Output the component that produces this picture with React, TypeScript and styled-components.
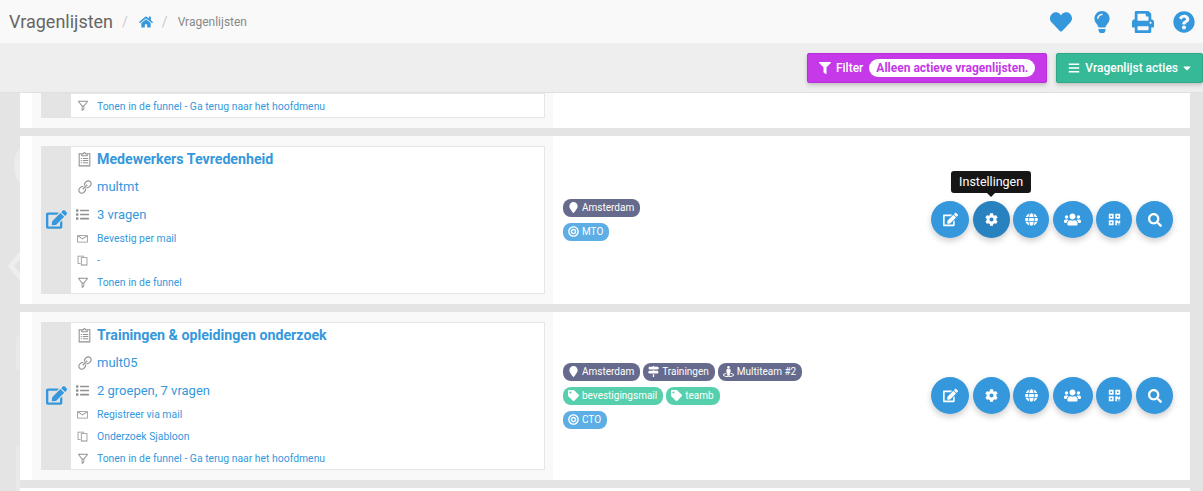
import { ReactNode } from 'react'
import styled, { createGlobalStyle } from 'styled-components'
import {
  FaBars, FaBullseye, FaCaretDown, FaCog, FaEdit, FaFilter, FaGlobe, FaHeart, FaHome, FaLightbulb, FaList,
  FaMapMarker, FaMapSigns, FaPrint, FaQrcode, FaQuestionCircle, FaSearch, FaStreetView, FaTag, FaUsers,
} from 'react-icons/fa'
import {
  LiaClipboardListSolid, LiaCopySolid, LiaEnvelopeSolid, LiaFilterSolid, LiaLinkSolid,
} from 'react-icons/lia'

const blue = '#3598dc'

const GlobalStyle = createGlobalStyle`
  html, body { margin: 0; padding: 0; height: 100%; overflow: hidden; background: #e4e4e4; }
  * { box-sizing: border-box; font-family: Roboto, 'Liberation Sans', sans-serif; }
`

const Page = styled.div`
  width: 1203px;
  height: 491px;
  overflow: hidden;
  position: relative;
`

const TopBar = styled.div`
  height: 43px;
  background: #f9f9f9;
  display: flex;
  align-items: center;
  padding: 0 8px 0 9px;
`

const PageTitle = styled.h1`
  margin: 0;
  font-size: 18px;
  font-weight: 400;
  color: #666;
`

const Crumbs = styled.div`
  display: flex;
  align-items: center;
  margin-left: 9px;
  gap: 10px;
  font-size: 12px;
  color: #888;
  flex: 1;
  svg { color: ${blue}; font-size: 14px; margin-left: 1px; margin-right: -1px; }
`

const Slash = styled.span`
  color: #ccc;
  font-size: 14px;
`

const TopIcons = styled.div`
  display: flex;
  align-items: center;
  gap: 19px;
  color: ${blue};
  font-size: 22px;
  svg { display: block; }
`

const ToolBar = styled.div`
  height: 50px;
  background: #eee;
  border-bottom: 1px solid #e0e0e0;
  display: flex;
  justify-content: flex-end;
  align-items: flex-start;
  gap: 9px;
  padding: 10px 0 0 0;
`

const ActionButton = styled.button<{ $bg: string; $edge: string }>`
  height: 30px;
  padding: 0 11px;
  border: 1px solid ${p => p.$edge};
  border-radius: 2px;
  background: ${p => p.$bg};
  color: #fff;
  display: flex;
  align-items: center;
  gap: 5px;
  font-size: 12px;
  font-weight: 500;
  box-shadow: 0 2px 4px rgba(0, 0, 0, 0.2);
`

const Caret = styled(FaCaretDown)`
  margin: 0 -2px;
`

const FilterPill = styled.span`
  background: #fff;
  color: #c539e8;
  font-weight: 700;
  font-size: 12px;
  border-radius: 10px;
  height: 18px;
  line-height: 18px;
  padding: 0 7px;
  margin-left: 1px;
  white-space: nowrap;
`

const List = styled.div`
  width: 1170px;
  margin-left: 20px;
  display: flex;
  flex-direction: column;
  gap: 7.5px;
`

const Card = styled.div<{ $clipped?: boolean }>`
  display: flex;
  background: #fff;
  height: ${p => (p.$clipped ? '35px' : '168.5px')};
`

const InfoCell = styled.div<{ $clipped?: boolean }>`
  width: 521px;
  margin-left: 12px;
  background: #f9f9f9;
  padding: ${p => (p.$clipped ? '0' : '10px')} 8px 10px 9px;
  display: flex;
`

const EditColumn = styled.div`
  width: 30px;
  background: #e4e4e4;
  color: ${blue};
  display: flex;
  align-items: center;
  justify-content: center;
  font-size: 21px;
  padding-left: 1px;
`

const InfoBox = styled.div<{ $clipped?: boolean }>`
  flex: 1;
  background: #fff;
  border: 1px solid #e6e6e6;
  border-left: 0;
  padding: ${p => (p.$clipped ? '1px' : '0')} 0 0 5px;
`

const rowHeights = { title: 25, link: 30, count: 26, small: 22 }
const rowFonts = { title: 14.2, link: 13, count: 13, small: 10.4 }

const InfoRow = styled.div<{ $size: keyof typeof rowHeights }>`
  display: flex;
  align-items: center;
  color: ${blue};
  height: ${p => rowHeights[p.$size]}px;
  font-size: ${p => rowFonts[p.$size]}px;
  font-weight: ${p => (p.$size === 'title' ? 700 : 400)};
  white-space: nowrap;
`

const RowIcon = styled.span<{ $size: number }>`
  width: 21px;
  flex: none;
  color: #909090;
  display: flex;
  font-size: ${p => p.$size}px;
`

const TagCell = styled.div`
  flex: 1;
  display: flex;
  align-items: center;
  padding: 0 17px 0 10px;
`

const Tags = styled.div`
  flex: 1;
  display: flex;
  flex-direction: column;
  gap: 6px;
`

const TagLine = styled.div`
  display: flex;
  gap: 3px;
`

const Tag = styled.span<{ $bg: string }>`
  display: flex;
  align-items: center;
  gap: 3px;
  height: 18px;
  padding: 0 6px 0 5px;
  border-radius: 8px;
  background: ${p => p.$bg};
  color: #fff;
  font-size: 10px;
  white-space: nowrap;
  svg { font-size: 11px; }
`

const Buttons = styled.div`
  display: flex;
  gap: 3.6px;
`

const RoundButton = styled.span<{ $w: number; $icon: number; $active?: boolean }>`
  width: ${p => p.$w}px;
  height: 37px;
  border-radius: 50%;
  background: ${p => (p.$active ? '#2882c0' : blue)};
  color: #fff;
  display: flex;
  align-items: center;
  justify-content: center;
  font-size: ${p => p.$icon}px;
  box-shadow: 0 3px 6px rgba(0, 0, 0, 0.2);
  position: relative;
`

const Tooltip = styled.span`
  position: absolute;
  left: 50%;
  bottom: 45px;
  transform: translateX(-50%);
  background: #161616;
  color: #fff;
  border-radius: 3px;
  font-size: 12.5px;
  height: 22px;
  line-height: 22px;
  padding: 0 8px;
  white-space: nowrap;
  &::after {
    content: '';
    position: absolute;
    left: 50%;
    bottom: -4px;
    margin-left: -4px;
    border: 4px solid transparent;
    border-bottom: 0;
    border-top-color: #161616;
  }
`

const Watermark = styled.svg`
  position: absolute;
  left: 0;
  top: 93px;
  width: 20px;
  height: 398px;
`

const rowIcons = {
  link: <LiaLinkSolid />,
  list: <FaList />,
  mail: <LiaEnvelopeSolid />,
  copy: <LiaCopySolid />,
  funnel: <LiaFilterSolid />,
}

type SurveyProps = {
  title: string
  code: string
  count: string
  mail: string
  template: string
  funnel: string
  tags: ReactNode
  tooltip?: boolean
}

const Survey = ({ title, code, count, mail, template, funnel, tags, tooltip }: SurveyProps) => (
  <Card>
    <InfoCell>
      <EditColumn><FaEdit /></EditColumn>
      <InfoBox>
        <InfoRow $size="title"><RowIcon $size={17}><LiaClipboardListSolid /></RowIcon>{title}</InfoRow>
        <InfoRow $size="link"><RowIcon $size={18}>{rowIcons.link}</RowIcon>{code}</InfoRow>
        <InfoRow $size="count"><RowIcon $size={13}>{rowIcons.list}</RowIcon>{count}</InfoRow>
        <InfoRow $size="small"><RowIcon $size={13}>{rowIcons.mail}</RowIcon>{mail}</InfoRow>
        <InfoRow $size="small"><RowIcon $size={13}>{rowIcons.copy}</RowIcon>{template}</InfoRow>
        <InfoRow $size="small"><RowIcon $size={14}>{rowIcons.funnel}</RowIcon>{funnel}</InfoRow>
      </InfoBox>
    </InfoCell>
    <TagCell>
      <Tags>{tags}</Tags>
      <Buttons>
        <RoundButton $w={38} $icon={15}><FaEdit /></RoundButton>
        <RoundButton $w={37} $icon={13} $active={tooltip}>
          <FaCog />
          {tooltip && <Tooltip>Instellingen</Tooltip>}
        </RoundButton>
        <RoundButton $w={36} $icon={13}><FaGlobe /></RoundButton>
        <RoundButton $w={40} $icon={17}><FaUsers /></RoundButton>
        <RoundButton $w={36} $icon={13}><FaQrcode /></RoundButton>
        <RoundButton $w={37} $icon={14}><FaSearch /></RoundButton>
      </Buttons>
    </TagCell>
  </Card>
)

export default function App() {
  return (
    <Page>
      <GlobalStyle />
      <TopBar>
        <PageTitle>Vragenlijsten</PageTitle>
        <Crumbs>
          <Slash>/</Slash>
          <FaHome />
          <Slash>/</Slash>
          Vragenlijsten
        </Crumbs>
        <TopIcons>
          <FaHeart />
          <FaLightbulb />
          <FaPrint />
          <FaQuestionCircle />
        </TopIcons>
      </TopBar>
      <ToolBar>
        <ActionButton $bg="#c539e8" $edge="#b92fdc">
          <FaFilter />Filter<FilterPill>Alleen actieve vragenlijsten.</FilterPill>
        </ActionButton>
        <ActionButton $bg="#36b997" $edge="#2fa888">
          <FaBars />Vragenlijst acties<Caret />
        </ActionButton>
      </ToolBar>
      <Watermark viewBox="0 0 20 398">
        <path d="M20 55 C12 62 12 84 20 90 Z" fill="#ececec" />
        <path d="M20 158 L8 173 L20 188 L20 180 L14 173 L20 166 Z" fill="#eeeeee" />
        <rect x="16" y="243" width="8" height="34" rx="3" fill="#e9e9e9" />
        <rect x="16" y="352" width="8" height="60" rx="3" fill="#e9e9e9" />
      </Watermark>
      <List>
        <Card $clipped>
          <InfoCell $clipped>
            <EditColumn />
            <InfoBox $clipped>
              <InfoRow $size="small">
                <RowIcon $size={14}>{rowIcons.funnel}</RowIcon>Tonen in de funnel - Ga terug naar het hoofdmenu
              </InfoRow>
            </InfoBox>
          </InfoCell>
        </Card>
        <Survey
          tooltip
          title="Medewerkers Tevredenheid"
          code="multmt"
          count="3 vragen"
          mail="Bevestig per mail"
          template="-"
          funnel="Tonen in de funnel"
          tags={
            <>
              <TagLine><Tag $bg="#666a8c"><FaMapMarker />Amsterdam</Tag></TagLine>
              <TagLine><Tag $bg="#5caee4"><FaBullseye />MTO</Tag></TagLine>
            </>
          }
        />
        <Survey
          title="Trainingen & opleidingen onderzoek"
          code="mult05"
          count="2 groepen, 7 vragen"
          mail="Registreer via mail"
          template="Onderzoek Sjabloon"
          funnel="Tonen in de funnel - Ga terug naar het hoofdmenu"
          tags={
            <>
              <TagLine>
                <Tag $bg="#666a8c"><FaMapMarker />Amsterdam</Tag>
                <Tag $bg="#666a8c"><FaMapSigns />Trainingen</Tag>
                <Tag $bg="#666a8c"><FaStreetView />Multiteam #2</Tag>
              </TagLine>
              <TagLine>
                <Tag $bg="#55cfac"><FaTag />bevestigingsmail</Tag>
                <Tag $bg="#55cfac"><FaTag />teamb</Tag>
              </TagLine>
              <TagLine><Tag $bg="#5caee4"><FaBullseye />CTO</Tag></TagLine>
            </>
          }
        />
        <Card />
      </List>
    </Page>
  )
}
